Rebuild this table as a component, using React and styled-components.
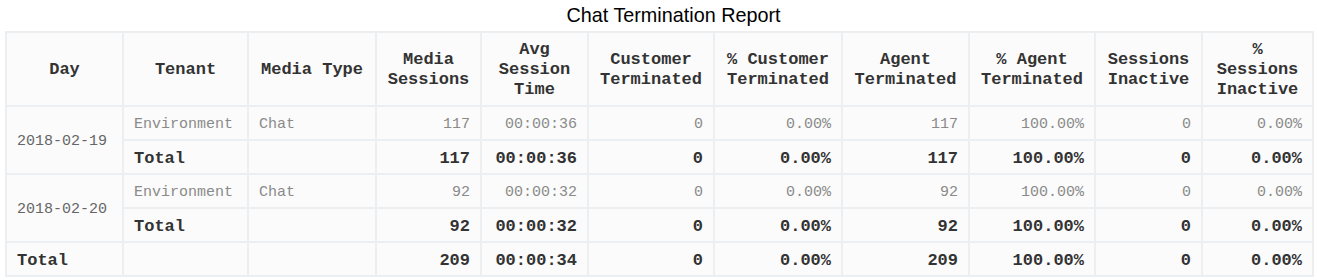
import styled, { createGlobalStyle } from "styled-components";

const GlobalStyle = createGlobalStyle`
	body {
		margin: 0;
		background: #ffffff;
	}
`;

const columns = [
	{ title: "Day", width: 117 },
	{ title: "Tenant", width: 125 },
	{ title: "Media Type", width: 128 },
	{ title: "Media Sessions", width: 105 },
	{ title: "Avg Session Time", width: 107 },
	{ title: "Customer Terminated", width: 126 },
	{ title: "% Customer Terminated", width: 128 },
	{ title: "Agent Terminated", width: 127 },
	{ title: "% Agent Terminated", width: 126 },
	{ title: "Sessions Inactive", width: 107 },
	{ title: "% Sessions Inactive", width: 111 },
];

const days = [
	{
		day: "2018-02-19",
		detail: ["117", "00:00:36", "0", "0.00%", "117", "100.00%", "0", "0.00%"],
		total: ["117", "00:00:36", "0", "0.00%", "117", "100.00%", "0", "0.00%"],
	},
	{
		day: "2018-02-20",
		detail: ["92", "00:00:32", "0", "0.00%", "92", "100.00%", "0", "0.00%"],
		total: ["92", "00:00:32", "0", "0.00%", "92", "100.00%", "0", "0.00%"],
	},
];

const grandTotal = ["209", "00:00:34", "0", "0.00%", "209", "100.00%", "0", "0.00%"];

const App = () => {
	return (
		<>
			<GlobalStyle />
			<Report>
				<Title>Chat Termination Report</Title>
				<Table>
					<colgroup>
						{columns.map((c) => (
							<col key={c.title} style={{ width: c.width }} />
						))}
					</colgroup>
					<thead>
						<tr>
							{columns.map((c) => (
								<HeadCell key={c.title}>{c.title}</HeadCell>
							))}
						</tr>
					</thead>
					<tbody>
						{days.map((d) => (
							<DayRows key={d.day} data={d} />
						))}
						<tr>
							<Cell $bold>Total</Cell>
							<Cell />
							<Cell />
							{grandTotal.map((v, i) => (
								<Cell key={i} $bold $num>
									{v}
								</Cell>
							))}
						</tr>
					</tbody>
				</Table>
			</Report>
		</>
	);
};

const DayRows = ({ data }) => (
	<>
		<tr>
			<Cell rowSpan={2} $dim>
				{data.day}
			</Cell>
			<Cell>Environment</Cell>
			<Cell>Chat</Cell>
			{data.detail.map((v, i) => (
				<Cell key={i} $num>
					{v}
				</Cell>
			))}
		</tr>
		<tr>
			<Cell $bold>Total</Cell>
			<Cell />
			{data.total.map((v, i) => (
				<Cell key={i} $bold $num>
					{v}
				</Cell>
			))}
		</tr>
	</>
);

const Report = styled.div`
	padding: 0 5px;
	width: 1307px;
`;

const Title = styled.h1`
	margin: 0;
	height: 31px;
	padding: 4px 0 0 30px;
	box-sizing: border-box;
	text-align: center;
	font-family: "Liberation Sans", Arial, sans-serif;
	font-weight: 400;
	font-size: 19.8px;
	line-height: 22px;
	color: #000;
`;

const Table = styled.table`
	width: 1307px;
	table-layout: fixed;
	border-collapse: collapse;
	border: 2px solid #ebeef1;
	background: #fbfbfb;
	font-family: "Liberation Mono", "Courier New", monospace;
`;

const HeadCell = styled.th`
	border: 2px solid #eceff2;
	height: 74px;
	padding: 2px 8px 0;
	box-sizing: border-box;
	text-align: center;
	vertical-align: middle;
	font-size: 17px;
	line-height: 20px;
	font-weight: 700;
	color: #333;
`;

const Cell = styled.td`
	border: 2px solid #eceff2;
	height: 34px;
	padding: 2px 10px 0;
	box-sizing: border-box;
	white-space: nowrap;
	vertical-align: middle;
	text-align: ${(p) => (p.$num ? "right" : "left")};
	font-size: ${(p) => (p.$bold ? "17px" : "15px")};
	font-weight: ${(p) => (p.$bold ? 700 : 400)};
	color: ${(p) => (p.$bold ? "#333" : p.$dim ? "#666" : "#8a8a8a")};
`;

export default App;
